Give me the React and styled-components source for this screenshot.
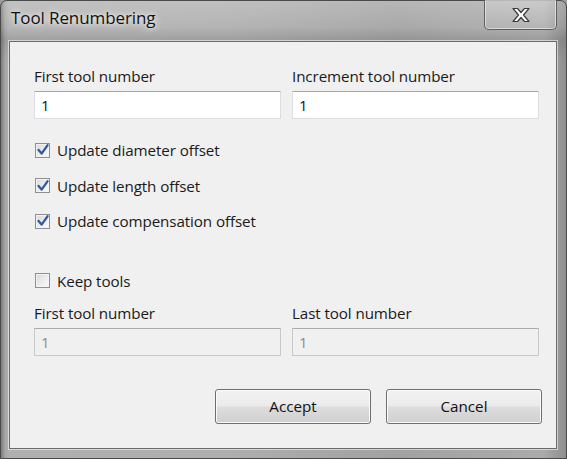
import React from "react";
import styled, { createGlobalStyle } from "styled-components";

const Global = createGlobalStyle`
  html, body { margin: 0; padding: 0; background: #9c9c9c; }
  body { font-family: "Open Sans", "Noto Sans", sans-serif; }
`;

const Frame = styled.div`
  position: relative;
  width: 567px;
  height: 459px;
  box-sizing: border-box;
  padding: 40px 9px 9px 8px;
  border: 1px solid #4a4a4a;
  border-radius: 7px 7px 0 0;
  background:
    linear-gradient(180deg, rgba(255,255,255,0.22) 0px, rgba(255,255,255,0.08) 26px, rgba(0,0,0,0.08) 38px, rgba(0,0,0,0) 60px),
    linear-gradient(90deg, #7c7c7c 0px, #a6a6a6 4px, #b0b0b0 8px, #aeaeae 40%, #a2a2a2 70%, #ababab 96%, #8e8e8e 100%);
  display: flex;
  flex-direction: column;
`;

const TitleBar = styled.div`
  position: absolute;
  left: 10px;
  top: 5px;
  font-size: 17px;
  color: #111;
  letter-spacing: -0.1px;
  text-shadow: 0 0 8px rgba(255,255,255,0.9), 0 0 4px rgba(255,255,255,0.8);
`;

const CloseButton = styled.div`
  position: absolute;
  right: 9px;
  top: -1px;
  width: 73px;
  height: 30px;
  box-sizing: border-box;
  border: 1px solid #5f5f5f;
  border-top: none;
  border-radius: 0 0 5px 5px;
  box-shadow: inset 0 0 0 1px rgba(255,255,255,0.5);
  background: linear-gradient(180deg, rgba(255,255,255,0.2), rgba(255,255,255,0.05));
  display: flex;
  align-items: center;
  justify-content: center;
`;

const Client = styled.div`
  flex: 1;
  background: #f0f0f0;
  border: 1px solid #6a6a6a;
  box-shadow: 0 0 0 1px rgba(255,255,255,0.55);
  padding: 24px 17px 0 24px;
  display: flex;
  flex-direction: column;
  box-sizing: border-box;
`;

const Grid = styled.div`
  display: grid;
  grid-template-columns: 247px 247px;
  column-gap: 11px;
  margin-top: ${p => p.$mt || 0}px;
`;

const Field = styled.div`
  display: flex;
  flex-direction: column;
`;

const Label = styled.div`
  font-size: 15.2px;
  line-height: 20px;
  color: #1a1a1a;
  margin-bottom: 5px;
  letter-spacing: -0.1px;
`;

const Input = styled.div`
  height: 28px;
  box-sizing: border-box;
  border: 1px solid ${p => (p.disabled ? "#c9c9c9" : "#dadde2")};
  border-top-color: ${p => (p.disabled ? "#acacac" : "#a3a6ab")};
  background: ${p => (p.disabled ? "#f0f0f0" : "#ffffff")};
  color: ${p => (p.disabled ? "#8d8d8d" : "#111")};
  font-size: 15px;
  padding: 0 6px;
  display: flex;
  align-items: center;
`;

const Checks = styled.div`
  display: flex;
  flex-direction: column;
  gap: 13.5px;
  margin-top: 20px;
`;

const CheckRow = styled.div`
  display: flex;
  align-items: center;
  height: 22px;
  margin-top: ${p => p.$mt || 0}px;
  font-size: 15.2px;
  color: #1a1a1a;
  letter-spacing: -0.1px;
`;

const Box = styled.div`
  width: 15px;
  height: 15px;
  box-sizing: border-box;
  border: 1px solid #8e8f8f;
  background: linear-gradient(135deg, #d8d8d8 0%, #efefef 60%, #fafafa 100%);
  box-shadow: inset 0 0 0 1px #f4f4f4;
  margin: 0 7px 0 1px;
  display: flex;
  align-items: center;
  justify-content: center;
`;

const Buttons = styled.div`
  display: flex;
  justify-content: flex-end;
  gap: 15px;
  margin-top: 33px;
  margin-right: -3px;
`;

const Button = styled.div`
  width: 156px;
  height: 35px;
  box-sizing: border-box;
  border: 1px solid #707070;
  border-radius: 3px;
  background: linear-gradient(180deg, #f2f2f2 0%, #ebebeb 48%, #dddddd 52%, #cfcfcf 100%);
  box-shadow: inset 0 0 0 1px #fbfbfb;
  font-size: 15.2px;
  color: #111;
  display: flex;
  align-items: center;
  justify-content: center;
`;

const Check = () => (
  <svg width="12" height="12" viewBox="0 0 12 12">
    <path d="M1.6 6 L4.6 9.6 L10.5 1.3" fill="none" stroke="#35599a" strokeWidth="2.3" strokeLinejoin="round" strokeLinecap="round" />
  </svg>
);

const CloseX = () => (
  <svg width="22" height="16" viewBox="0 0 22 16">
    <path d="M3 1.5 L7.5 1.5 L11 5.5 L14.5 1.5 L19 1.5 L13.5 8 L19 14.5 L14.5 14.5 L11 10.5 L7.5 14.5 L3 14.5 L8.5 8 Z"
      fill="#ffffff" stroke="#3c3c3c" strokeWidth="1.2" strokeLinejoin="round" />
  </svg>
);

const CheckItem = ({ checked, children, mt }) => (
  <CheckRow $mt={mt}>
    <Box>{checked && <Check />}</Box>
    {children}
  </CheckRow>
);

export default function App() {
  return (
    <>
      <Global />
      <Frame>
        <TitleBar>Tool Renumbering</TitleBar>
        <CloseButton><CloseX /></CloseButton>
        <Client>
          <Grid>
            <Field>
              <Label>First tool number</Label>
              <Input>1</Input>
            </Field>
            <Field>
              <Label>Increment tool number</Label>
              <Input>1</Input>
            </Field>
          </Grid>
          <Checks>
            <CheckItem checked>Update diameter offset</CheckItem>
            <CheckItem checked>Update length offset</CheckItem>
            <CheckItem checked>Update compensation offset</CheckItem>
            <CheckItem mt={24}>Keep tools</CheckItem>
          </Checks>
          <Grid $mt={11}>
            <Field>
              <Label>First tool number</Label>
              <Input disabled>1</Input>
            </Field>
            <Field>
              <Label>Last tool number</Label>
              <Input disabled>1</Input>
            </Field>
          </Grid>
          <Buttons>
            <Button>Accept</Button>
            <Button>Cancel</Button>
          </Buttons>
        </Client>
      </Frame>
    </>
  );
}
